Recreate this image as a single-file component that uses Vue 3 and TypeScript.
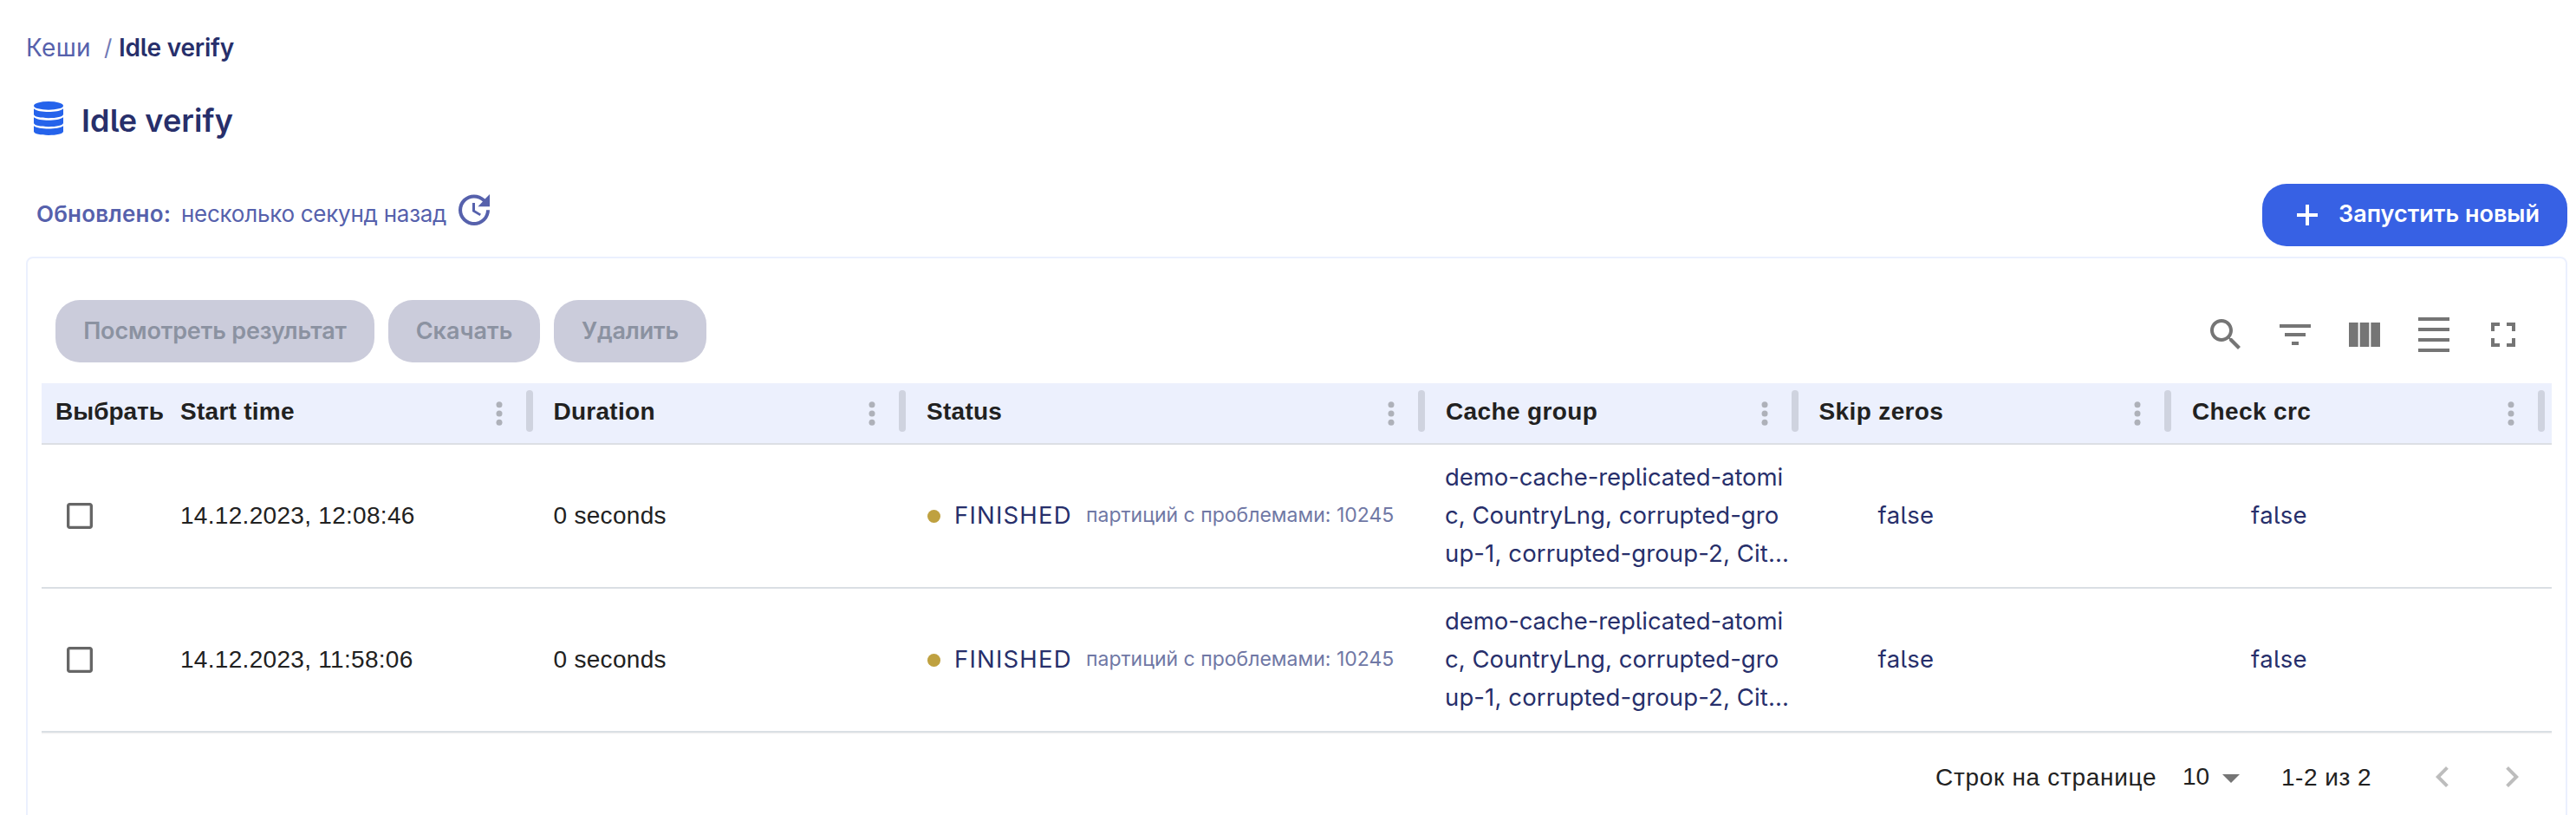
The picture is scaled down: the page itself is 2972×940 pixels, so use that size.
<script setup lang="ts">
interface Column {
  title: string
  tone: string
}

interface Run {
  startTime: string
  duration: string
  status: string
  note: string
  skipZeros: string
  checkCrc: string
}

const columns: Column[] = [
  { title: 'Start time', tone: 'ls-a' },
  { title: 'Duration', tone: 'ls-a' },
  { title: 'Status', tone: 'ls-a' },
  { title: 'Cache group', tone: 'ls-b' },
  { title: 'Skip zeros', tone: 'ls-b' },
  { title: 'Check crc', tone: 'ls-b' },
]

const cacheLines: string[] = [
  'demo-cache-replicated-atomi',
  'c, CountryLng, corrupted-gro',
  'up-1, corrupted-group-2, Cit...',
]

const runs: Run[] = ['14.12.2023, 12:08:46', '14.12.2023, 11:58:06'].map((startTime) => ({
  startTime,
  duration: '0 seconds',
  status: 'FINISHED',
  note: 'партиций с проблемами: 10245',
  skipZeros: 'false',
  checkCrc: 'false',
}))

const tools: { name: string; path: string }[] = [
  { name: 'search', path: 'M15.5 14h-.79l-.28-.27C15.41 12.59 16 11.11 16 9.5 16 5.91 13.09 3 9.5 3S3 5.91 3 9.5 5.91 16 9.5 16c1.61 0 3.09-.59 4.23-1.57l.27.28v.79l5 4.99L20.49 19l-4.99-5zm-6 0C7.01 14 5 11.99 5 9.5S7.01 5 9.5 5 14 7.01 14 9.5 11.99 14 9.5 14z' },
  { name: 'filter', path: 'M10 18h4v-2h-4v2zM3 6v2h18V6H3zm3 7h12v-2H6v2z' },
  { name: 'columns', path: 'M14.67 5v14H9.33V5h5.34zm1 14H21V5h-5.33v14zm-7.34 0V5H3v14h5.33z' },
  { name: 'density', path: 'M3 2h18v2H3zM3 20h18v2H3zM3 14h18v2H3zM3 8h18v2H3z' },
  { name: 'fullscreen', path: 'M7 14H5v5h5v-2H7v-3zm-2-4h2V7h3V5H5v5zm12 7h-3v2h5v-5h-2v3zM14 5v2h3v3h2V5h-5z' },
]
</script>

<template>
  <main class="page">
    <nav class="crumbs">
      <a class="crumb">Кеши</a>
      <span class="slash">/</span>
      <span class="current">Idle verify</span>
    </nav>

    <header class="title">
      <svg class="db" viewBox="0 0 34 39">
        <ellipse cx="17" cy="4.900" rx="17" ry="4.900" />
        <path d="M0 8.200C3 11 10 12 17 12S31 11 34 8.200V15c0 2.400-8 4.200-17 4.200S0 17.400 0 15z" />
        <path d="M0 18.200C3 20.700 10 21.700 17 21.700S31 20.700 34 18.200V25c0 2.400-8 4.200-17 4.200S0 27.400 0 25z" />
        <path d="M0 28.200C3 30.500 10 31.500 17 31.500S31 30.500 34 28.200V34.800c0 2.400-8 4.200-17 4.200S0 37.200 0 34.800z" />
      </svg>
      <h1>Idle verify</h1>
    </header>

    <section class="bar">
      <div class="updated">
        <b>Обновлено:</b>
        <span>несколько секунд назад</span>
        <svg class="refresh" viewBox="0 0 24 24">
          <path d="M21 10.120h-6.780l2.740-2.820c-2.730-2.700-7.150-2.800-9.880-.1-2.730 2.710-2.730 7.080 0 9.790s7.150 2.710 9.880 0C18.320 15.650 19 14.080 19 12.100h2c0 1.980-.88 4.550-2.640 6.290-3.510 3.480-9.210 3.480-12.720 0-3.500-3.470-3.530-9.110-.02-12.580s9.140-3.470 12.650 0L21 3v7.120zM12.500 8v4.250l3.500 2.080-.72 1.210L11 13V8h1.500z" />
        </svg>
      </div>
      <button class="primary">
        <svg viewBox="0 0 24 24"><path d="M0 10h24v4H0zM10 0h4v24h-4z" /></svg>
        <span>Запустить новый</span>
      </button>
    </section>

    <section class="card">
      <div class="toolbar">
        <div class="actions">
          <button class="muted w-view"><span>Посмотреть результат</span></button>
          <button class="muted w-load"><span>Скачать</span></button>
          <button class="muted w-del"><span>Удалить</span></button>
        </div>
        <div class="tools">
          <svg v-for="t in tools" :key="t.name" viewBox="0 0 24 24"><path :d="t.path" /></svg>
        </div>
      </div>

      <div class="grid head">
        <div class="th first"><span class="label">Выбрать</span></div>
        <div v-for="c in columns" :key="c.title" class="th">
          <span :class="['label', c.tone]">{{ c.title }}</span>
          <svg class="more" viewBox="0 0 8 28">
            <circle cx="4" cy="3.700" r="3.500" /><circle cx="4" cy="14" r="3.500" /><circle cx="4" cy="24.300" r="3.500" />
          </svg>
          <i class="resizer"></i>
        </div>
      </div>

      <div v-for="r in runs" :key="r.startTime" class="grid row">
        <div class="td check">
          <svg viewBox="0 0 24 24"><path d="M19 5v14H5V5h14m0-2H5c-1.100 0-2 .9-2 2v14c0 1.100.9 2 2 2h14c1.100 0 2-.9 2-2V5c0-1.100-.9-2-2-2z" /></svg>
        </div>
        <div class="td date">{{ r.startTime }}</div>
        <div class="td date">{{ r.duration }}</div>
        <div class="td brand status">
          <i class="dot"></i>
          <span class="state">{{ r.status }}</span>
          <span class="note">{{ r.note }}</span>
        </div>
        <div class="td brand caches">
          <span v-for="(l, i) in cacheLines" :key="l" :class="'line-' + i">{{ l }}</span>
        </div>
        <div class="td brand"><span class="flag">{{ r.skipZeros }}</span></div>
        <div class="td brand"><span class="flag">{{ r.checkCrc }}</span></div>
      </div>

      <footer class="pager">
        <span class="per-page">Строк на странице</span>
        <span class="size">10</span>
        <svg class="caret" viewBox="0 0 20 10"><path d="M0 0h20L10 10z" /></svg>
        <span class="range">1-2 из 2</span>
        <svg class="chev" viewBox="0 0 24 24"><path d="M15.410 7.410 14 6l-6 6 6 6 1.410-1.410L10.830 12z" /></svg>
        <svg class="chev" viewBox="0 0 24 24"><path d="M10 6 8.590 7.410 13.170 12l-4.580 4.590L10 18l6-6z" /></svg>
      </footer>
    </section>
  </main>
</template>

<style>
body {
  background: #fff;
  overflow: hidden;
}
</style>

<style scoped>
.page {
  box-sizing: border-box;
  width: 2972px;
  height: 940px;
  padding: 35px 10px 0 30px;
  overflow: hidden;
  display: flex;
  flex-direction: column;
  font-family: Inter, "Noto Sans", sans-serif;
  font-feature-settings: "cv05";
  color: #272f6b;
  white-space: nowrap;
}
svg {
  display: block;
  flex: none;
}
button {
  border: 0;
  padding: 0;
  font: inherit;
  font-feature-settings: inherit;
}
.crumbs {
  display: flex;
  height: 40px;
  line-height: 40px;
  font-size: 28px;
}
.crumb {
  width: 90px;
  color: #5661ac;
  letter-spacing: 0.3px;
}
.slash {
  width: 17px;
  font-size: 26px;
  color: #7179b5;
}
.current {
  font-weight: 600;
  letter-spacing: -0.2px;
}
.title {
  display: flex;
  margin-top: 40px;
  height: 48px;
}
.db {
  width: 34px;
  height: 39px;
  margin: 2px 21px 0 9px;
  fill: #2563eb;
}
h1 {
  margin: 0;
  font-size: 36px;
  line-height: 49px;
  font-weight: 600;
  letter-spacing: 0.1px;
}
.bar {
  display: flex;
  justify-content: space-between;
  margin-top: 49px;
  height: 72px;
}
.updated {
  display: flex;
  padding-left: 12px;
  font-size: 26px;
  line-height: 69px;
  color: #5661ac;
}
.updated b {
  width: 167px;
  font-weight: 600;
  letter-spacing: 0.2px;
}
.updated span {
  width: 314px;
  letter-spacing: -0.26px;
}
.refresh {
  width: 48px;
  height: 48px;
  margin-top: 6px;
  fill: #5661ac;
}
.primary {
  display: flex;
  align-items: center;
  width: 352px;
  height: 72px;
  border-radius: 28px;
  background: #3761e4;
  color: #fff;
  font-size: 27px;
  font-weight: 600;
}
.primary svg {
  width: 24px;
  height: 24px;
  margin: 0 24px 0 40px;
  fill: #fff;
}
.primary span,
.muted span {
  line-height: 70px;
  padding-bottom: 2px;
}
.card {
  box-sizing: border-box;
  width: 2932px;
  height: 700px;
  margin-top: 12px;
  padding: 0 16px;
  border: 2px solid #ebf0fe;
  border-radius: 8px;
}
.toolbar {
  display: flex;
  justify-content: space-between;
  height: 144px;
  padding: 0 32px 0 16px;
}
.actions {
  display: flex;
  gap: 16px;
  padding-top: 48px;
}
.muted {
  height: 72px;
  border-radius: 28px;
  background: #cbccdb;
  color: #8b92a1;
  font-size: 27px;
  font-weight: 600;
}
.w-view {
  width: 368px;
  letter-spacing: -0.15px;
}
.w-load {
  width: 175px;
}
.w-del {
  width: 176px;
  letter-spacing: -0.2px;
}
.tools {
  display: flex;
  gap: 32px;
  padding-top: 64px;
}
.tools svg {
  width: 48px;
  height: 48px;
  fill: #757575;
}
.grid {
  display: grid;
  box-sizing: border-box;
  width: 2896px;
  grid-template-columns: 144px 430.500px 430.500px 599px 430.500px 430.500px 431px;
}
.head,
.date,
.pager {
  font-family: "Liberation Sans", Arial, sans-serif;
  font-size: 28px;
  color: #212121;
}
.head {
  height: 71px;
  background: #ecf0fd;
  border-bottom: 2px solid #dcdfe4;
  font-weight: 700;
}
.th {
  display: flex;
  padding: 8px 8px 0 16px;
  line-height: 50px;
}
.label {
  flex: 1;
}
.ls-a {
  letter-spacing: 0.27px;
}
.ls-b {
  letter-spacing: 0.37px;
}
.more {
  width: 8px;
  height: 28px;
  margin: 13px 27px 0 0;
  fill: #aeb1b9;
}
.resizer {
  width: 8px;
  height: 48px;
  border-radius: 4px;
  background: #cfd3df;
}
.row {
  height: 166px;
  border-bottom: 2px solid #dadfe4;
}
.td {
  display: flex;
  align-items: center;
  padding-left: 16px;
}
.brand {
  padding-bottom: 2px;
  font-size: 27.500px;
}
.check {
  padding-left: 24px;
}
.check svg {
  width: 40px;
  height: 40px;
  fill: #666;
}
.date {
  letter-spacing: 0.3px;
}
.status {
  padding-left: 17px;
}
.dot {
  width: 15px;
  height: 15px;
  margin: 2px 16px 0 0;
  border-radius: 50%;
  background: #bfa140;
}
.state {
  width: 152px;
  letter-spacing: 1.200px;
}
.note {
  font-size: 23px;
  color: #7078a5;
}
.caches {
  flex-direction: column;
  justify-content: center;
  align-items: flex-start;
  padding-left: 15px;
  line-height: 44px;
}
.line-0 {
  letter-spacing: -0.08px;
}
.line-1 {
  letter-spacing: 0.04px;
}
.line-2 {
  letter-spacing: 0.12px;
}
.flag {
  width: 201px;
  text-align: center;
  letter-spacing: 0.3px;
}
.pager {
  display: flex;
  align-items: center;
  justify-content: flex-end;
  height: 102px;
  padding: 0 22px 0 0;
  box-shadow: inset 0 2px 2px -1px #eee;
}
.per-page {
  width: 285px;
  letter-spacing: 0.7px;
  padding-top: 2px;
}
.size {
  width: 46px;
}
.caret {
  width: 20px;
  height: 10px;
  margin: 4px 48px 0 0;
  fill: #757575;
}
.range {
  width: 162px;
  letter-spacing: 0.5px;
  padding-top: 2px;
}
.chev {
  width: 48px;
  height: 48px;
  fill: #bdbdbd;
}
.chev + .chev {
  margin-left: 32px;
}
</style>
